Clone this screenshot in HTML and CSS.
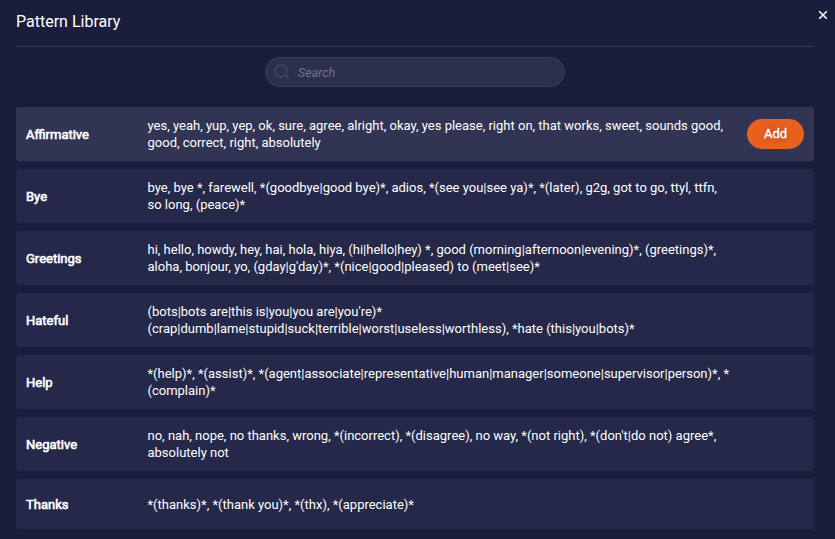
FILE: index.html
```html
<!DOCTYPE html>
<html lang="en">
<head>
<meta charset="utf-8">
<title>Pattern Library</title>
<link rel="stylesheet" href="styles.css">
</head>
<body>
<div class="dialog">
  <header class="header"><h1>Pattern Library</h1>
    <button class="close" aria-label="Close"><svg width="10" height="10" viewBox="0 0 10 10"><path d="M1.2 1.2 8.8 8.8M8.8 1.2 1.2 8.8" fill="none" stroke="#fff" stroke-width="1.6"/></svg></button>
  </header>
  <label class="search">
    <svg width="16" height="16" viewBox="0 0 16 16" fill="none" stroke="#4c4e6b" stroke-width="1.2"><circle cx="7" cy="6.9" r="5.9"/><path d="m11.2 11.1 3.8 3.8"/></svg>
    <input type="text" placeholder="Search">
  </label>
  <ul class="list">
    <li class="row active"><h2>Affirmative</h2><p>yes, yeah, yup, yep, ok, sure, agree, alright, okay, yes please, right on, that works, sweet, sounds good,<br>good, correct, right, absolutely</p><button class="add">Add</button></li>
    <li class="row"><h2>Bye</h2><p>bye, bye *, farewell, *(goodbye|good bye)*, adios, *(see you|see ya)*, *(later), g2g, got to go, ttyl, ttfn,<br>so long, (peace)*</p></li>
    <li class="row"><h2>Greetings</h2><p>hi, hello, howdy, hey, hai, hola, hiya, (hi|hello|hey) *, good (morning|afternoon|evening)*, (greetings)*,<br>aloha, bonjour, yo, (gday|g'day)*, *(nice|good|pleased) to (meet|see)*</p></li>
    <li class="row"><h2>Hateful</h2><p>(bots|bots are|this is|you|you are|you're)*<br>(crap|dumb|lame|stupid|suck|terrible|worst|useless|worthless), *hate (this|you|bots)*</p></li>
    <li class="row"><h2>Help</h2><p>*(help)*, *(assist)*, *(agent|associate|representative|human|manager|someone|supervisor|person)*, *<br>(complain)*</p></li>
    <li class="row"><h2>Negative</h2><p>no, nah, nope, no thanks, wrong, *(incorrect), *(disagree), no way, *(not right), *(don't|do not) agree*,<br>absolutely not</p></li>
    <li class="row last"><h2>Thanks</h2><p>*(thanks)*, *(thank you)*, *(thx), *(appreciate)*</p></li>
  </ul>
</div>
</body>
</html>
```
FILE: styles.css
```css
* { box-sizing: border-box; }
body { margin: 0; background: #1b1d3d; color: #fff; font-family: Roboto, sans-serif; overflow: hidden; }
.dialog { height: 539px; padding: 0 21px 0 16px; }
.header { height: 47px; border-bottom: 1px solid #383a54; display: flex; justify-content: space-between; }
h1 { margin: 12px 0 0; font-size: 16px; line-height: 19px; font-weight: 400; }
.close { border: 0; padding: 0; background: none; width: 10px; height: 10px; margin: 10px -14px 0 0; display: flex; }
.search { display: flex; align-items: center; gap: 8px; width: 300px; height: 30px; margin: 10px auto 20px; padding: 0 8px; border: 1px solid #3e405e; border-radius: 15px; background: #2d2f4e; }
.search input { flex: 1; min-width: 0; border: 0; padding: 1px 0 0; outline: 0; background: none; color: #fff; font: italic 12.5px/16px Roboto, sans-serif; }
.search input::placeholder { color: #717389; }
.list { list-style: none; margin: 0; padding: 0; display: flex; flex-direction: column; gap: 8px; }
.row { height: 54px; display: flex; align-items: center; padding: 0 10px; border-radius: 3px; background: #252848; }
.active { background: #313453; }
.last { height: 50px; }
h2 { margin: 0; width: 121.5px; flex: none; font-size: 13px; line-height: 17px; font-weight: 400; -webkit-text-stroke: .6px #fff; }
p { margin: 0; flex: 1; font-size: 13px; line-height: 17px; white-space: nowrap; }
.add { flex: none; width: 57px; height: 30px; border: 0; padding: 0; border-radius: 15px; background: #ea611f; color: #fff; font: 400 13px/16px Roboto, sans-serif; -webkit-text-stroke: .35px #fff; text-shadow: 0 0 10px rgba(0,0,0,.4); }
```
